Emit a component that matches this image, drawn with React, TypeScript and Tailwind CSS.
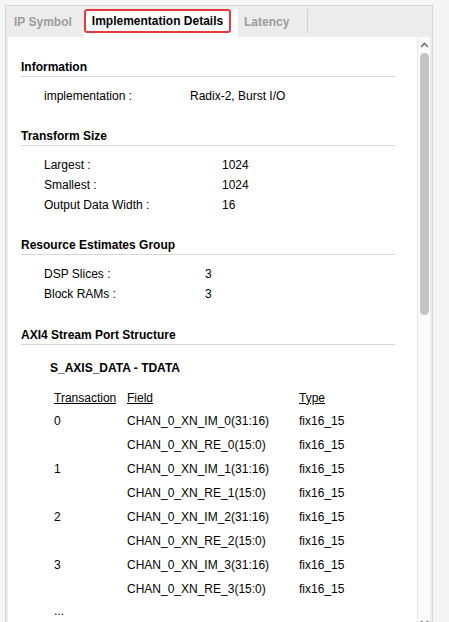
const info = [{ label: "implementation :", value: "Radix-2, Burst I/O" }];

const transform = [
  { label: "Largest :", value: "1024" },
  { label: "Smallest :", value: "1024" },
  { label: "Output Data Width :", value: "16" },
];

const resources = [
  { label: "DSP Slices :", value: "3" },
  { label: "Block RAMs :", value: "3" },
];

const transactions = [
  { id: "0", im: "CHAN_0_XN_IM_0(31:16)", re: "CHAN_0_XN_RE_0(15:0)" },
  { id: "1", im: "CHAN_0_XN_IM_1(31:16)", re: "CHAN_0_XN_RE_1(15:0)" },
  { id: "2", im: "CHAN_0_XN_IM_2(31:16)", re: "CHAN_0_XN_RE_2(15:0)" },
  { id: "3", im: "CHAN_0_XN_IM_3(31:16)", re: "CHAN_0_XN_RE_3(15:0)" },
];

function SectionHeading({ title }: { title: string }) {
  return (
    <div className="h-[20px] border-b border-[#d6d6d6] pt-[1px] font-bold leading-[19px]">
      {title}
    </div>
  );
}

function KeyValues({
  rows,
  labelWidth,
}: {
  rows: { label: string; value: string }[];
  labelWidth: string;
}) {
  return (
    <div className="mt-[9px] pl-[23px]">
      {rows.map((row) => (
        <div key={row.label} className="flex h-[20px] items-center">
          <span className={labelWidth}>{row.label}</span>
          <span>{row.value}</span>
        </div>
      ))}
    </div>
  );
}

function Scrollbar() {
  return (
    <div className="flex w-[13px] shrink-0 flex-col items-center border-l border-[#e6e6e6] bg-[#fbfbfb]">
      <svg className="mt-[5px]" width="9" height="6" viewBox="0 0 9 6">
        <path d="M1 5 L4.5 1.5 L8 5" fill="none" stroke="#707070" strokeWidth="1.6" />
      </svg>
      <div className="mt-[5px] h-[262px] w-[9px] rounded-full bg-[#c4c4c4]" />
      <div className="flex-1" />
      <svg className="mb-[-2px]" width="9" height="6" viewBox="0 0 9 6">
        <path d="M1 1 L4.5 4.5 L8 1" fill="none" stroke="#707070" strokeWidth="1.6" />
      </svg>
    </div>
  );
}

export default function App() {
  return (
    <div className="h-[622px] overflow-hidden bg-[#f5f5f5] pl-[5px] pt-[5px] font-['Liberation_Sans',Arial,sans-serif] text-[12px] text-black">
      <div className="flex h-[620px] w-[428px] flex-col border border-[#d6d6d6] bg-[#ececec]">
        {/* tabs */}
        <div className="flex h-[31px] shrink-0 items-start font-bold text-[#9c9c9c]">
          <div className="flex h-[31px] w-[78px] items-center pl-[8px]">IP Symbol</div>
          <div className="mt-[3px] h-[28px] w-[154px] bg-white">
            <div className="flex h-[24px] w-[147px] items-center justify-center rounded-[3px] border-2 border-[#e8383d] text-black">
              Implementation Details
            </div>
          </div>
          <div className="flex h-[31px] w-[69px] items-center pl-[6px]">Latency</div>
          <div className="mt-[3px] h-[24px] w-px bg-[#cfcfcf]" />
        </div>

        {/* body */}
        <div className="flex min-h-0 flex-1 px-[2px]">
          <div className="min-w-0 flex-1 bg-white pl-[13px] pr-[22px] pt-[20px]">
            <SectionHeading title="Information" />
            <KeyValues rows={info} labelWidth="w-[146px]" />

            <div className="mt-[20px]">
              <SectionHeading title="Transform Size" />
              <KeyValues rows={transform} labelWidth="w-[178px]" />
            </div>

            <div className="mt-[20px]">
              <SectionHeading title="Resource Estimates Group" />
              <KeyValues rows={resources} labelWidth="w-[161px]" />
            </div>

            <div className="mt-[21px]">
              <SectionHeading title="AXI4 Stream Port Structure" />
              <div className="mt-[13px] pl-[29px] font-bold leading-[20px]">S_AXIS_DATA - TDATA</div>
              <div className="mt-[8px] pl-[33px]">
                <div className="flex h-[23px] items-center">
                  <span className="w-[73px] underline">Transaction</span>
                  <span className="w-[172px] underline">Field</span>
                  <span className="underline">Type</span>
                </div>
                {transactions.map((t) => (
                  <div key={t.id}>
                    <div className="flex h-[24px] items-center">
                      <span className="w-[73px]">{t.id}</span>
                      <span className="w-[172px]">{t.im}</span>
                      <span>fix16_15</span>
                    </div>
                    <div className="flex h-[24px] items-center">
                      <span className="w-[73px]" />
                      <span className="w-[172px]">{t.re}</span>
                      <span>fix16_15</span>
                    </div>
                  </div>
                ))}
                <div className="flex h-[20px] items-center">...</div>
              </div>
            </div>
          </div>
          <Scrollbar />
        </div>
      </div>
    </div>
  );
}
